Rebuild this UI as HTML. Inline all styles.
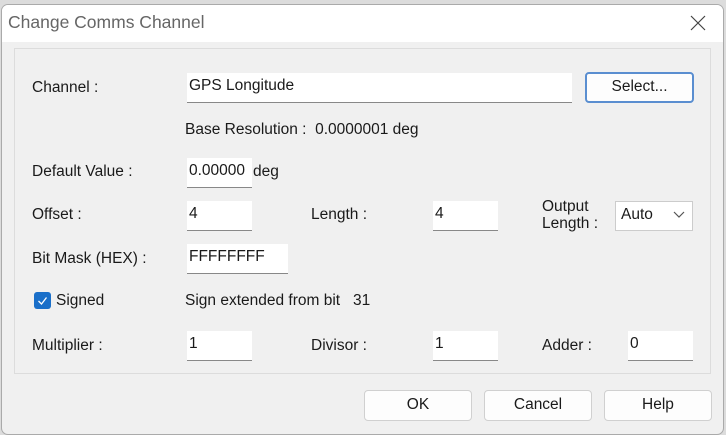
<!DOCTYPE html><html><head><style>
body{margin:0;width:726px;height:435px;background:#dcdcdc;position:relative;overflow:hidden;font-family:"Liberation Sans",sans-serif;font-size:15.5px;color:#1a1a1a}
.dlg{position:absolute;left:1px;top:4px;width:721px;height:429px;background:#f0f0f0;border:1px solid #aaa;border-radius:7px;overflow:hidden}
.tb{position:absolute;left:0;top:0;width:100%;height:37px;background:#fff}
.a{position:absolute;white-space:nowrap}
.f{position:absolute;background:#fff;border-bottom:1px solid #888;box-sizing:border-box;padding:4px 2px;white-space:nowrap}
.b{position:absolute;background:#fdfdfd;border:1px solid #d0d0d0;border-radius:4px;box-sizing:border-box;text-align:center;line-height:28px}
</style></head><body>
<div class="dlg">
<div class="tb"></div>
<div class="a" style="left:6px;top:7px;font-size:17.5px;color:#666">Change Comms Channel</div>
<svg class="a" style="left:688px;top:10px" width="16" height="16"><path d="M1 1L15 15M15 1L1 15" stroke="#444" stroke-width="1.2"/></svg>
<div class="a" style="left:12px;top:43px;width:697px;height:326px;border:1px solid #dcdcdc;box-sizing:border-box"></div>
<div class="a" style="left:30px;top:74px">Channel :</div>
<div class="f" style="left:185px;top:68px;width:385px;height:30px">GPS Longitude</div>
<div class="b" style="left:583px;top:67px;width:109px;height:31px;border:2px solid #5a8ed0;line-height:26px">Select...</div>
<div class="a" style="left:183px;top:116px">Base Resolution :&nbsp;&nbsp;0.0000001 deg</div>
<div class="a" style="left:30px;top:158px">Default Value :</div>
<div class="f" style="left:185px;top:153px;width:65px;height:30px">0.00000</div>
<div class="a" style="left:251px;top:158px">deg</div>
<div class="a" style="left:30px;top:201px">Offset :</div>
<div class="f" style="left:185px;top:196px;width:65px;height:30px">4</div>
<div class="a" style="left:309px;top:201px">Length :</div>
<div class="f" style="left:431px;top:196px;width:65px;height:30px">4</div>
<div class="a" style="left:540px;top:193px;line-height:17px">Output<br>Length :</div>
<div class="f" style="left:613px;top:196px;width:78px;height:30px;border:1px solid #ccc;padding-left:5px">Auto</div>
<svg class="a" style="left:671px;top:206px" width="12" height="8"><path d="M1 1L6 6L11 1" fill="none" stroke="#555" stroke-width="1.2"/></svg>
<div class="a" style="left:30px;top:245px">Bit Mask (HEX) :</div>
<div class="f" style="left:185px;top:239px;width:101px;height:30px">FFFFFFFF</div>
<div class="a" style="left:32px;top:287px;width:17px;height:17px;background:#1a6fc9;border-radius:3px"></div>
<svg class="a" style="left:35px;top:290px" width="11" height="11"><path d="M1.5 6L4.5 9L9.5 2.5" fill="none" stroke="#fff" stroke-width="1.3"/></svg>
<div class="a" style="left:54px;top:287px">Signed</div>
<div class="a" style="left:183px;top:287px">Sign extended from bit&nbsp;&nbsp;&nbsp;31</div>
<div class="a" style="left:30px;top:332px">Multiplier :</div>
<div class="f" style="left:185px;top:326px;width:65px;height:30px">1</div>
<div class="a" style="left:309px;top:332px">Divisor :</div>
<div class="f" style="left:431px;top:326px;width:65px;height:30px">1</div>
<div class="a" style="left:540px;top:332px">Adder :</div>
<div class="f" style="left:626px;top:326px;width:65px;height:30px">0</div>
<div class="b" style="left:362px;top:385px;width:108px;height:31px">OK</div>
<div class="b" style="left:482px;top:385px;width:108px;height:31px">Cancel</div>
<div class="b" style="left:602px;top:385px;width:108px;height:31px">Help</div>
</div>
</body></html>
